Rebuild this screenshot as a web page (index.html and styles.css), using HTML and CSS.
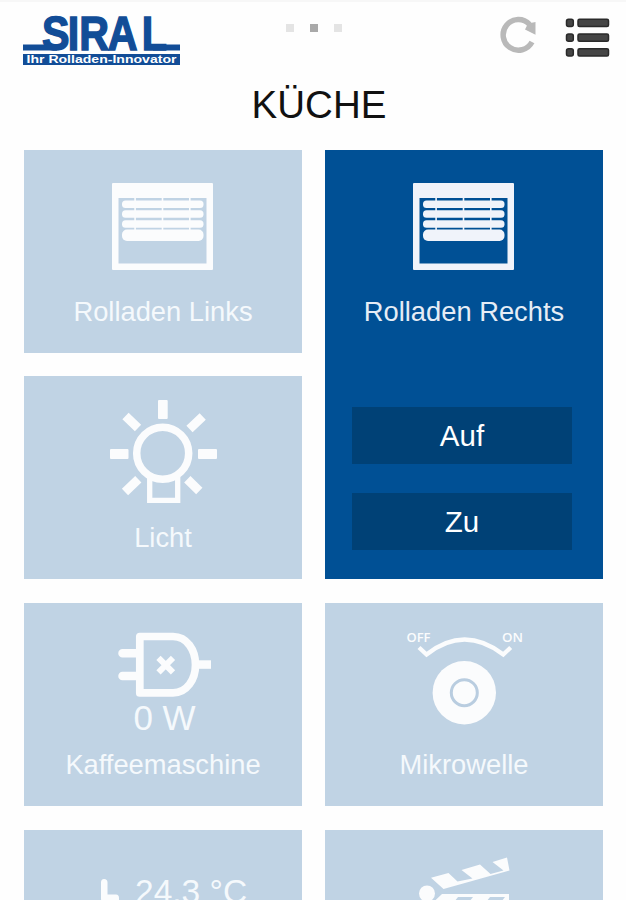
FILE: index.html
```html
<!DOCTYPE html>
<html lang="de">
<head>
  <meta charset="utf-8">
  <title>KÜCHE</title>
  <link rel="stylesheet" href="styles.css">
</head>
<body>
  <!-- Header -->
  <header class="header">
    <svg class="logo" width="158" height="56" viewBox="0 -4 158 56">
      <text class="logo-name" transform="scale(0.86 1)" x="22 52 65.500 98.500 138" y="36">SIRAL</text>
      <path class="logo-blue" d="M0 30.500H34V36.500H0ZM130 30.500H157V36.500H130Z"/>
      <rect class="logo-blue" x="0" y="40" width="157" height="11"/>
      <text class="logo-claim" x="3.500" y="49.300" textLength="150" lengthAdjust="spacingAndGlyphs">Ihr Rolladen-Innovator</text>
    </svg>

    <div class="dots">
      <span class="dot"></span>
      <span class="dot active"></span>
      <span class="dot"></span>
    </div>

    <div class="actions">
      <svg width="38" height="38" viewBox="0 0 38 38">
        <path class="refresh-ring" d="M32 26A15.300 15.300 0 1 1 29.500 8.300"/>
        <path class="refresh-head" d="M35.500 6V18.700L25 13.500L28 7.500Z"/>
      </svg>
      <svg class="menu" width="45" height="40" viewBox="0 0 45 40">
        <rect x="1.500" y="1.200" width="6.800" height="7.200" rx="2"/>
        <rect x="13" y="1.200" width="30.500" height="7.200" rx="1.500"/>
        <rect x="1.500" y="16" width="6.800" height="7.200" rx="2"/>
        <rect x="13" y="16" width="30.500" height="7.200" rx="1.500"/>
        <rect x="1.500" y="30.800" width="6.800" height="7.200" rx="2"/>
        <rect x="13" y="30.800" width="30.500" height="7.200" rx="1.500"/>
      </svg>
    </div>
  </header>

  <h1 class="title">KÜCHE</h1>

  <!-- Tiles -->
  <main class="grid">
    <div class="tile">
      <svg class="icon" viewBox="0 0 278 146">
        <path fill-rule="evenodd" d="M89 33H188Q189 33 189 34V119Q189 120 188 120H89Q88 120 88 119V34Q88 33 89 33ZM94.500 48V113.500H182.500V48Z"/>
        <path d="M110.300 47h1.600v34h-1.600zM137.700 47h1.600v34h-1.600zM165 47h1.600v34h-1.600z"/>
        <rect x="98" y="50.500" width="81.500" height="7.500" rx="3.500"/>
        <rect x="98" y="60.300" width="81.500" height="7.500" rx="3.500"/>
        <rect x="98" y="70.200" width="81.500" height="7.500" rx="3.500"/>
        <rect x="98" y="79.500" width="81.500" height="11.500" rx="5"/>
      </svg>
      <div class="label">Rolladen Links</div>
    </div>

    <div class="tile open">
      <svg class="icon" viewBox="0 0 278 146">
        <path fill-rule="evenodd" d="M89 33H188Q189 33 189 34V119Q189 120 188 120H89Q88 120 88 119V34Q88 33 89 33ZM94.500 48V113.500H182.500V48Z"/>
        <path d="M110.300 47h1.600v34h-1.600zM137.700 47h1.600v34h-1.600zM165 47h1.600v34h-1.600z"/>
        <rect x="98" y="50.500" width="81.500" height="7.500" rx="3.500"/>
        <rect x="98" y="60.300" width="81.500" height="7.500" rx="3.500"/>
        <rect x="98" y="70.200" width="81.500" height="7.500" rx="3.500"/>
        <rect x="98" y="79.500" width="81.500" height="11.500" rx="5"/>
      </svg>
      <div class="label">Rolladen Rechts</div>
      <div class="buttons">
        <button class="btn">Auf</button>
        <button class="btn">Zu</button>
      </div>
    </div>

    <div class="tile">
      <svg class="icon" viewBox="0 0 278 146">
        <circle class="line" cx="138.700" cy="77.300" r="26" stroke-width="7.500"/>
        <path class="line" stroke-width="5.300" d="M125.700 101V124.300H153.700V101"/>
        <rect x="134" y="24" width="9.700" height="19" rx="1"/>
        <rect x="86" y="73" width="18.500" height="10" rx="1"/>
        <rect x="174" y="73" width="19" height="10" rx="1"/>
        <path class="line" stroke-width="9" d="M101.500 40L114 52M178.700 40.500L165.500 53M101 116L114.300 103.300M163.300 103.300L175.300 115"/>
      </svg>
      <div class="label">Licht</div>
    </div>

    <div class="tile">
      <svg class="icon icon-small" viewBox="0 0 278 94">
        <path class="line round" stroke-width="7.700" d="M115.800 33.500H149C163 33.500 171.500 47 171.500 61.700S163 89.900 149 89.900H115.800Z"/>
        <path class="line round" stroke-width="8.500" d="M98.500 50.300H114M98.500 73H114"/>
        <rect x="174" y="57.300" width="13" height="8.500"/>
        <path class="line" stroke-width="6" d="M134.500 54.800L149 69.300M149 54.800L134.500 69.300"/>
      </svg>
      <div class="value">0 W</div>
      <div class="label">Kaffeemaschine</div>
    </div>

    <div class="tile">
      <svg class="icon" viewBox="0 0 278 146">
        <path class="line" stroke-width="4.300" d="M94 44.500L101.500 51.500Q139.300 21.500 178.300 51.500L185.700 44.500"/>
        <circle cx="139.300" cy="89.700" r="31.700"/>
        <circle class="ring" cx="139.300" cy="89.700" r="13"/>
        <text class="switch" x="81.500" y="38.500" textLength="24" lengthAdjust="spacingAndGlyphs">OFF</text>
        <text class="switch" x="177" y="38.500" textLength="21" lengthAdjust="spacingAndGlyphs">ON</text>
      </svg>
      <div class="label">Mikrowelle</div>
    </div>

    <div class="tile">
      <div class="reading">
        <svg width="20" height="40" viewBox="0 0 20 40">
          <path d="M3 0Q6.500 0 6.500 3.500V15.500H15Q18 15.500 18 19V36H12V23H3Q0 23 0 19.500V3.500Q0 0 3 0Z"/>
        </svg>
        <span>24.3 °C</span>
      </div>
    </div>

    <div class="tile">
      <svg class="icon" viewBox="0 0 278 146">
        <path d="M106 47.700L123.500 43L132.500 51.500L147.500 48.500L136.500 40L155 34.500L165.500 44L178.500 40.500L167.500 32L182 27.500L184.500 40.500L118.500 59Z"/>
        <circle cx="102" cy="63.500" r="8"/>
        <path fill-rule="evenodd" d="M117 64H184V118H98V82ZM133 67L126 76H141L148 67ZM165 67L158 76H173L180 67Z"/>
      </svg>
    </div>
  </main>
</body>
</html>
```

FILE: styles.css
```css
* {
  margin: 0;
  padding: 0;
  box-sizing: border-box;
}

body {
  height: 900px;
  overflow: hidden;
  background: #fefefe;
  border-top: 2px solid #f7f7f7;
  font-family: "Liberation Sans", Arial, sans-serif;
}

/* Header */
.header {
  display: grid;
  grid-template-columns: 263px 56px 1fr;
  align-items: start;
  height: 78px;
  padding: 8px 16px 0 23px;
}

.logo-name {
  font-size: 48px;
  font-weight: bold;
  fill: #124d97;
  stroke: #124d97;
  stroke-width: 1.5px;
}

.logo-blue {
  fill: #124d97;
}

.logo-claim {
  font-size: 11.5px;
  font-weight: bold;
  fill: #fff;
}

.dots {
  display: flex;
  justify-content: space-between;
  padding-top: 14px;
}

.dot {
  width: 8px;
  height: 8px;
  background: #e4e4e4;
}

.dot.active {
  background: #a9a9a9;
}

.actions {
  display: flex;
  justify-content: flex-end;
  gap: 27px;
  padding-top: 6px;
}

.refresh-ring {
  fill: none;
  stroke: #b9b9b9;
  stroke-width: 5.5px;
}

.refresh-head {
  fill: #b9b9b9;
}

.menu {
  margin-top: 2px;
}

.menu rect {
  fill: #454545;
  stroke: #2a2a2a;
  stroke-width: 1.5px;
}

.title {
  height: 69.5px;
  padding-left: 12px;
  font-size: 38.5px;
  font-weight: normal;
  line-height: 50px;
  text-align: center;
  color: #111;
}

/* Tiles */
.grid {
  display: grid;
  grid-template-columns: 278px 278px;
  grid-auto-rows: 203px;
  gap: 23.8px 23px;
  padding: 0 23px 0 24px;
}

.tile {
  background: #c0d3e4;
  color: #f5f9fc;
  text-align: center;
}

.tile.open {
  grid-row: span 2;
  background: #005095;
}

.icon {
  display: block;
  width: 278px;
  height: 146px;
  fill: #fbfcfd;
}

.open .icon {
  fill: #f0f3fa;
}

.icon-small {
  height: 94px;
}

.line {
  fill: none;
  stroke: #fbfcfd;
}

.round {
  stroke-linecap: round;
  stroke-linejoin: round;
}

.ring {
  fill: none;
  stroke: #b9cde0;
  stroke-width: 3px;
}

.switch {
  font-family: "Open Sans", sans-serif;
  font-size: 12.5px;
  font-weight: 600;
}

.label {
  font-size: 27.3px;
  line-height: 32px;
}

.open .label {
  color: #e6edf6;
}

.value {
  height: 52px;
  padding-left: 3px;
  font-size: 35px;
  line-height: 42px;
}

.reading {
  display: flex;
  padding: 49px 0 0 77px;
  gap: 14px;
  font-size: 33.5px;
  line-height: 20px;
}

.reading svg {
  fill: #fbfcfd;
}

.reading span {
  padding-top: 3px;
}

.buttons {
  display: flex;
  flex-direction: column;
  gap: 29px;
  padding: 79px 31px 0 27px;
}

.btn {
  height: 57px;
  padding-top: 2px;
  border: none;
  background: #004176;
  color: #fff;
  font-family: inherit;
  font-size: 29.5px;
}
```
